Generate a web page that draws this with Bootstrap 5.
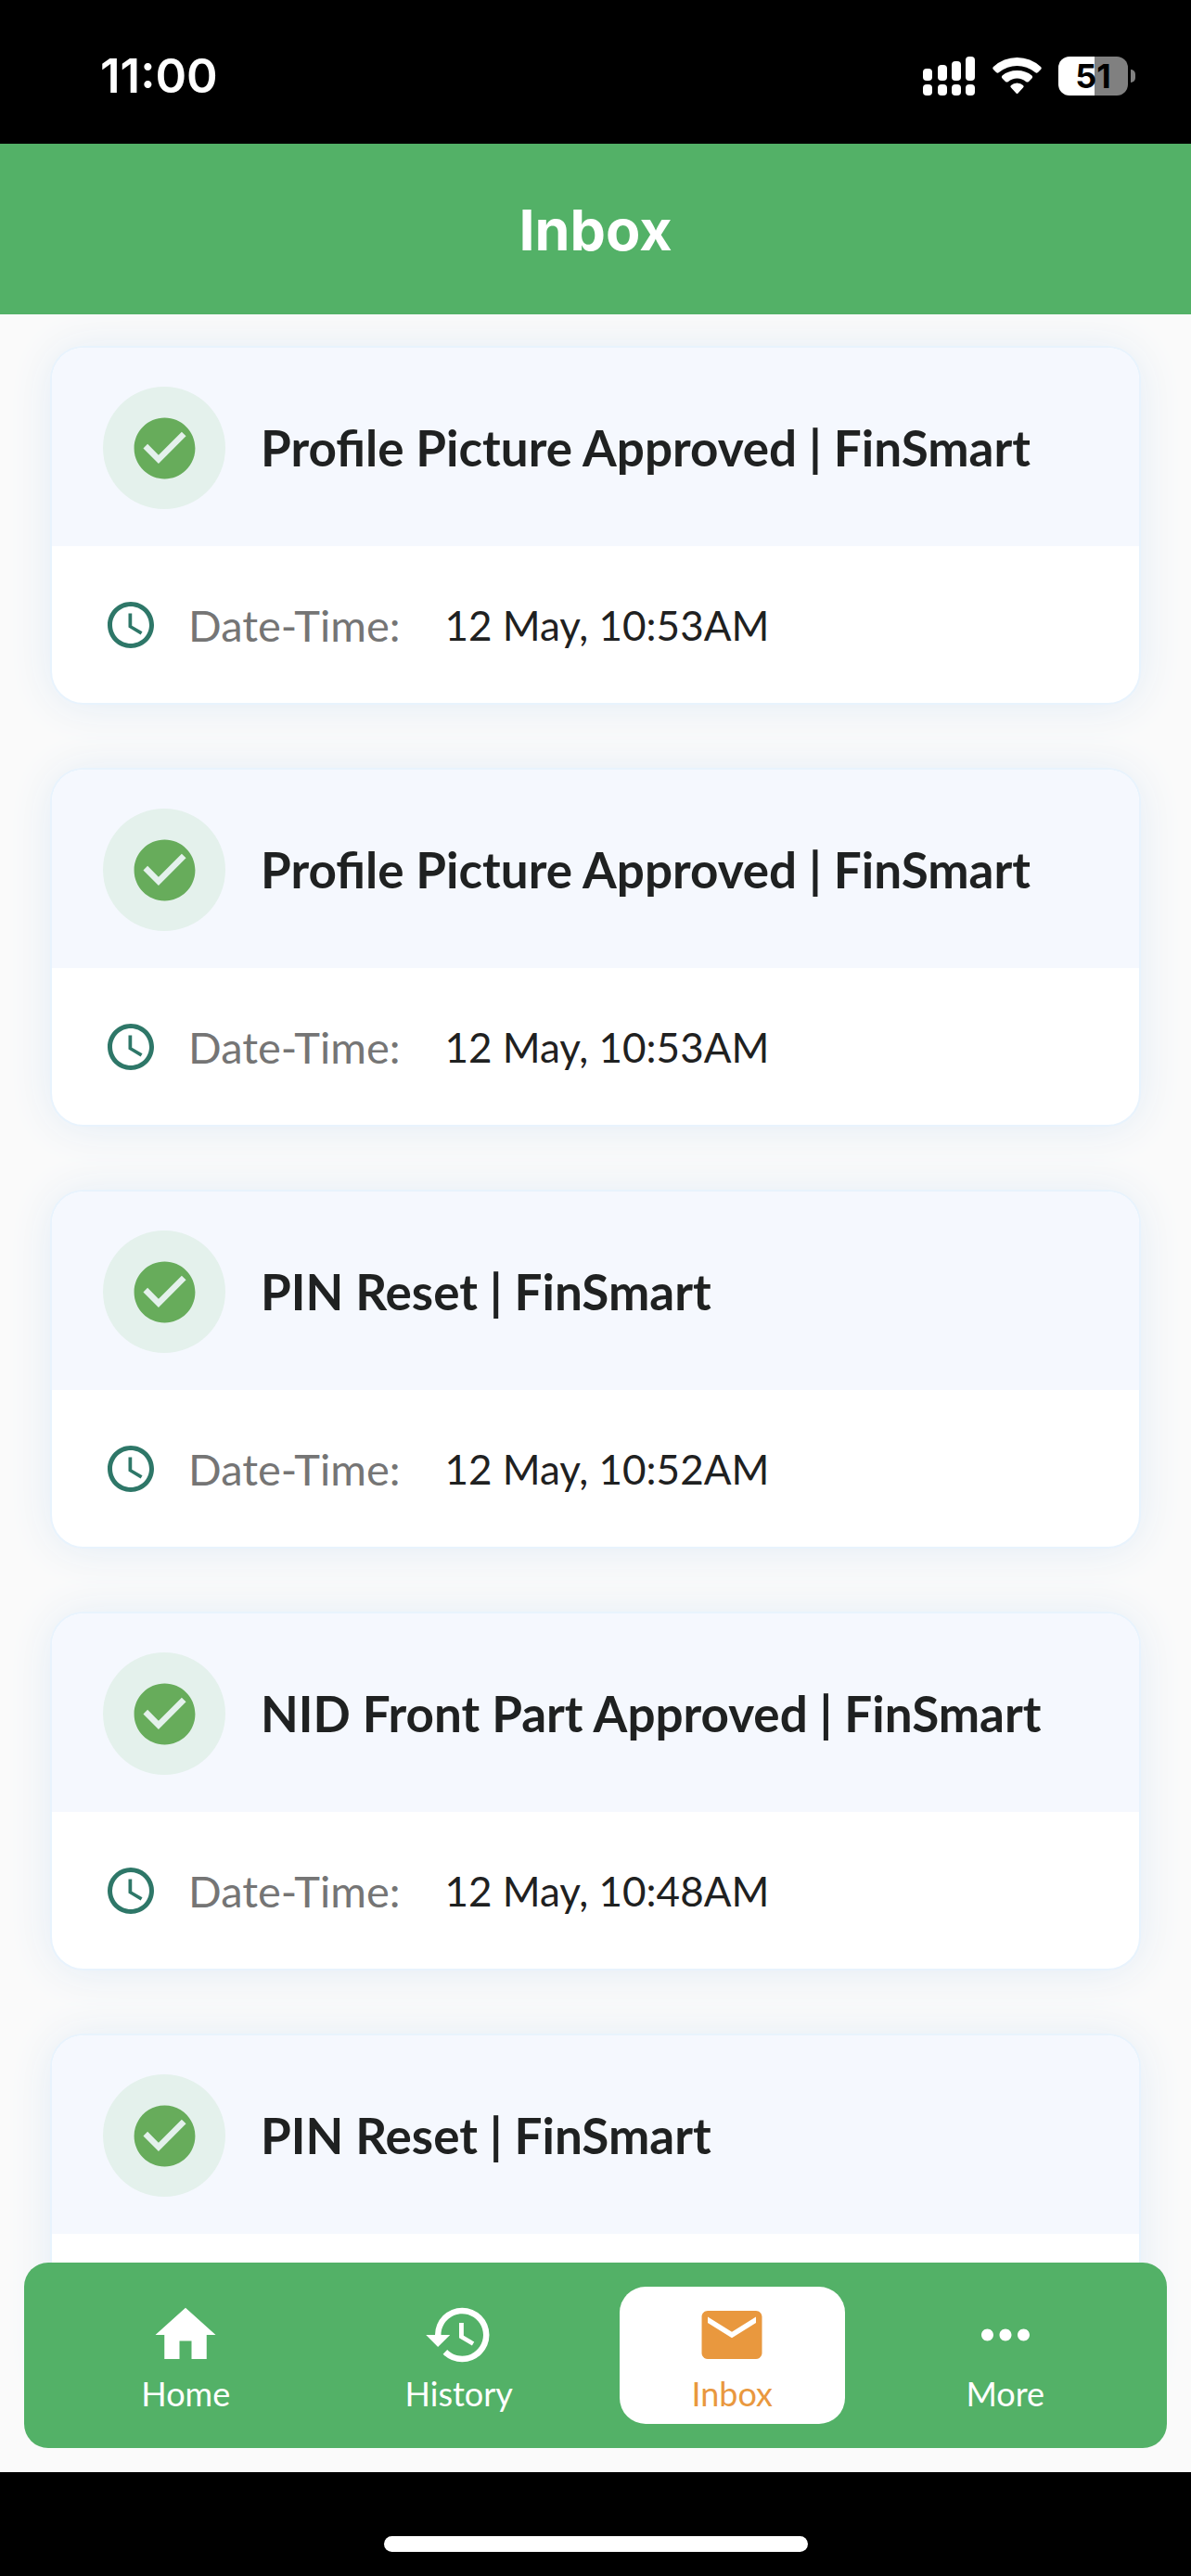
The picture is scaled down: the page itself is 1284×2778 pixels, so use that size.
<!DOCTYPE html>
<html lang="en">
<head>
<meta charset="utf-8">
<meta name="viewport" content="width=device-width, initial-scale=1">
<title>Inbox</title>
<link href="https://cdn.jsdelivr.net/npm/bootstrap@5.3.0/dist/css/bootstrap.min.css" rel="stylesheet">
<style>
  body { background: #fafafa; color: #1f2121; font-family: Lato, "Noto Sans", sans-serif; }
  svg { display: block; flex: none; fill: currentColor; }
  .status-bar { height: 155px; padding: 8px 60px 0 108px; font-family: Inter, sans-serif; }
  .status-time { font-size: 51px; line-height: 60px; font-weight: 600; }
  .status-icons { gap: 18px; }
  .battery-body { width: 75px; height: 42px; border-radius: 12px; color: #000; font-size: 36px; line-height: 42px; font-weight: 700; background: linear-gradient(90deg, #fff 52%, #808080 52%); }
  .battery-tip { width: 5px; height: 14px; margin-left: 3px; border-radius: 0 7px 7px 0; background: #808080; }
  .app-bar, .tab-bar { background: #53b167; }
  .app-bar { height: 184px; padding-top: 2px; }
  .app-title { font-family: Inter, sans-serif; font-size: 61px; line-height: 72px; font-weight: 700; }
  .inbox-list { padding: 36px 56px 0; gap: 72px; min-height: 0; }
  .message { --bs-card-border-width: 0; --bs-card-border-radius: 34px; --bs-card-inner-border-radius: 34px; --bs-card-bg: #fff; flex: none; box-shadow: 0 0 0 2px #e8f3fd, 0 2px 48px #e1ebf5; }
  .message-head { height: 214px; padding: 2px 55px 0; gap: 38px; background: #f5f8fe; }
  .message-head h2 { font-size: 53px; line-height: 68px; font-weight: 700; }
  .state-mark { width: 132px; height: 132px; background: #e4f1ec; color: #67ac5b; }
  .message-info { height: 169px; padding: 0 55px; line-height: 56px; }
  .message-info svg { color: #2e7768; margin-right: 32px; }
  .message-info dt { color: #757575; margin-right: 48px; font-size: 47px; }
  .message-info dd { font-size: 44px; }
  .tab-dock { padding: 0 26px 26px; }
  .tab-bar { padding: 26px 53px; gap: 52px; border-radius: 26px; }
  .tab-item { height: 148px; padding-top: 13px; border-radius: 28px; color: #fff; font-size: 36px; line-height: 48px; text-decoration: none; }
  .tab-item.active { background: #fff; color: #e9983e; }
  .home-area { height: 112px; padding-top: 69px; }
  .home-handle { width: 457px; height: 17px; }
</style>
<script src="https://cdn.jsdelivr.net/npm/bootstrap@5.3.0/dist/js/bootstrap.bundle.min.js"></script>
</head>
<body>
<svg class="d-none" aria-hidden="true">
  <symbol id="i-check" viewBox="0 0 24 24"><path d="M12 2C6.48 2 2 6.48 2 12s4.480 10 10 10 10-4.480 10-10S17.520 2 12 2zm-2 15l-5-5 1.410-1.410L10 14.170l7.590-7.590L19 8l-9 9z"/></symbol>
  <symbol id="i-clock" viewBox="0 0 24 24"><path d="M11.990 2C6.470 2 2 6.480 2 12s4.470 10 9.990 10C17.520 22 22 17.520 22 12S17.520 2 11.990 2zM12 20c-4.420 0-8-3.580-8-8s3.580-8 8-8 8 3.580 8 8-3.580 8-8 8zm.5-13H11v6l5.250 3.150.75-1.230-4.500-2.670z"/></symbol>
</svg>
<div class="d-flex flex-column vh-100 overflow-hidden">
  <div class="status-bar bg-black text-white d-flex align-items-center justify-content-between flex-shrink-0">
    <span class="status-time">11:00</span>
    <div class="status-icons d-flex align-items-center">
      <svg width="57" height="42" viewBox="0 0 57 42" aria-label="Signal"><rect x="0" y="13" width="10" height="13" rx="4"/><rect x="16" y="9" width="10" height="17" rx="4"/><rect x="31" y="5" width="10" height="21" rx="4"/><rect x="46" y="0" width="10" height="26" rx="4"/><rect x="0" y="30" width="10" height="12" rx="4"/><rect x="16" y="30" width="10" height="12" rx="4"/><rect x="31" y="30" width="10" height="12" rx="4"/><rect x="46" y="30" width="10" height="12" rx="4"/></svg>
      <svg width="53" height="42" viewBox="0 0 53 42" aria-label="Wi-Fi"><path d="M1 11Q12 1 26.500 1T52 11Q53.500 12.500 52 14L49 17Q47.500 18.500 46 17Q37 10 26.500 10T7 17Q5.500 18.500 4 17L1 14Q-.5 12.500 1 11z"/><path d="M10.500 20.500Q17 15 26.500 15T42.500 20.500Q44 22 42.500 23.500L39 27Q37.500 28 36 27Q32 23.500 26.500 23.500T17 27Q15.500 28 14 27L10.500 23.500Q9 22 10.500 20.500z"/><path d="M20 31Q22.500 28.500 26.500 28.500T33 31Q34.500 32 33 33.500L27.500 39.500Q26.500 40.500 25.500 39.500L20 33.500Q18.500 32 20 31z"/></svg>
      <div class="d-flex align-items-center"><span class="battery-body text-center">51</span><span class="battery-tip"></span></div>
    </div>
  </div>
  <header class="app-bar text-white d-flex align-items-center justify-content-center flex-shrink-0"><h1 class="app-title m-0">Inbox</h1></header>
  <div class="flex-grow-1 position-relative d-flex flex-column overflow-hidden">
    <main class="inbox-list d-flex flex-column flex-grow-1 overflow-hidden">
      <article class="card message">
        <div class="message-head card-header border-0 d-flex align-items-center"><span class="state-mark rounded-circle d-flex align-items-center justify-content-center flex-shrink-0"><svg width="79" height="79"><use href="#i-check"/></svg></span><h2 class="m-0">Profile Picture Approved | FinSmart</h2></div>
        <dl class="message-info d-flex align-items-center m-0"><svg width="60" height="60"><use href="#i-clock"/></svg><dt class="fw-normal">Date-Time:</dt><dd class="m-0">12 May, 10:53AM</dd></dl>
      </article>
      <article class="card message">
        <div class="message-head card-header border-0 d-flex align-items-center"><span class="state-mark rounded-circle d-flex align-items-center justify-content-center flex-shrink-0"><svg width="79" height="79"><use href="#i-check"/></svg></span><h2 class="m-0">Profile Picture Approved | FinSmart</h2></div>
        <dl class="message-info d-flex align-items-center m-0"><svg width="60" height="60"><use href="#i-clock"/></svg><dt class="fw-normal">Date-Time:</dt><dd class="m-0">12 May, 10:53AM</dd></dl>
      </article>
      <article class="card message">
        <div class="message-head card-header border-0 d-flex align-items-center"><span class="state-mark rounded-circle d-flex align-items-center justify-content-center flex-shrink-0"><svg width="79" height="79"><use href="#i-check"/></svg></span><h2 class="m-0">PIN Reset | FinSmart</h2></div>
        <dl class="message-info d-flex align-items-center m-0"><svg width="60" height="60"><use href="#i-clock"/></svg><dt class="fw-normal">Date-Time:</dt><dd class="m-0">12 May, 10:52AM</dd></dl>
      </article>
      <article class="card message">
        <div class="message-head card-header border-0 d-flex align-items-center"><span class="state-mark rounded-circle d-flex align-items-center justify-content-center flex-shrink-0"><svg width="79" height="79"><use href="#i-check"/></svg></span><h2 class="m-0">NID Front Part Approved | FinSmart</h2></div>
        <dl class="message-info d-flex align-items-center m-0"><svg width="60" height="60"><use href="#i-clock"/></svg><dt class="fw-normal">Date-Time:</dt><dd class="m-0">12 May, 10:48AM</dd></dl>
      </article>
      <article class="card message">
        <div class="message-head card-header border-0 d-flex align-items-center"><span class="state-mark rounded-circle d-flex align-items-center justify-content-center flex-shrink-0"><svg width="79" height="79"><use href="#i-check"/></svg></span><h2 class="m-0">PIN Reset | FinSmart</h2></div>
        <div class="message-info"></div>
      </article>
    </main>
    <div class="tab-dock position-absolute bottom-0 start-0 end-0">
      <nav class="tab-bar d-flex" aria-label="Main">
        <a class="tab-item flex-fill w-100 d-flex flex-column align-items-center" href="#home"><svg width="78" height="78" viewBox="0 0 24 24"><path d="M10 20v-6h4v6h5v-8h3L12 3 2 12h3v8z"/></svg>Home</a>
        <a class="tab-item flex-fill w-100 d-flex flex-column align-items-center" href="#history"><svg width="78" height="78" viewBox="0 0 24 24"><path d="M13 3a9 9 0 0 0-9 9H1l3.890 3.890.07.14L9 12H6c0-3.870 3.130-7 7-7s7 3.130 7 7-3.130 7-7 7c-1.930 0-3.680-.79-4.940-2.060l-1.420 1.420A8.954 8.954 0 0 0 13 21a9 9 0 0 0 0-18zm-1 5v5l4.280 2.540.72-1.210-3.500-2.080V8z"/></svg>History</a>
        <a class="tab-item active flex-fill w-100 d-flex flex-column align-items-center" href="#inbox" aria-current="page"><svg width="78" height="78" viewBox="0 0 24 24"><path d="M20 4H4c-1.100 0-1.990.9-1.990 2L2 18c0 1.100.9 2 2 2h16c1.100 0 2-.9 2-2V6c0-1.100-.9-2-2-2zm0 4l-8 5-8-5V6l8 5 8-5v2z"/></svg>Inbox</a>
        <a class="tab-item flex-fill w-100 d-flex flex-column align-items-center" href="#more"><svg width="78" height="78" viewBox="0 0 24 24"><path d="M6 10c-1.100 0-2 .9-2 2s.9 2 2 2 2-.9 2-2-.9-2-2-2zm12 0c-1.100 0-2 .9-2 2s.9 2 2 2 2-.9 2-2-.9-2-2-2zm-6 0c-1.100 0-2 .9-2 2s.9 2 2 2 2-.9 2-2-.9-2-2-2z"/></svg>More</a>
      </nav>
    </div>
  </div>
  <div class="home-area bg-black flex-shrink-0"><div class="home-handle bg-white rounded-pill mx-auto"></div></div>
</div>
</body>
</html>
